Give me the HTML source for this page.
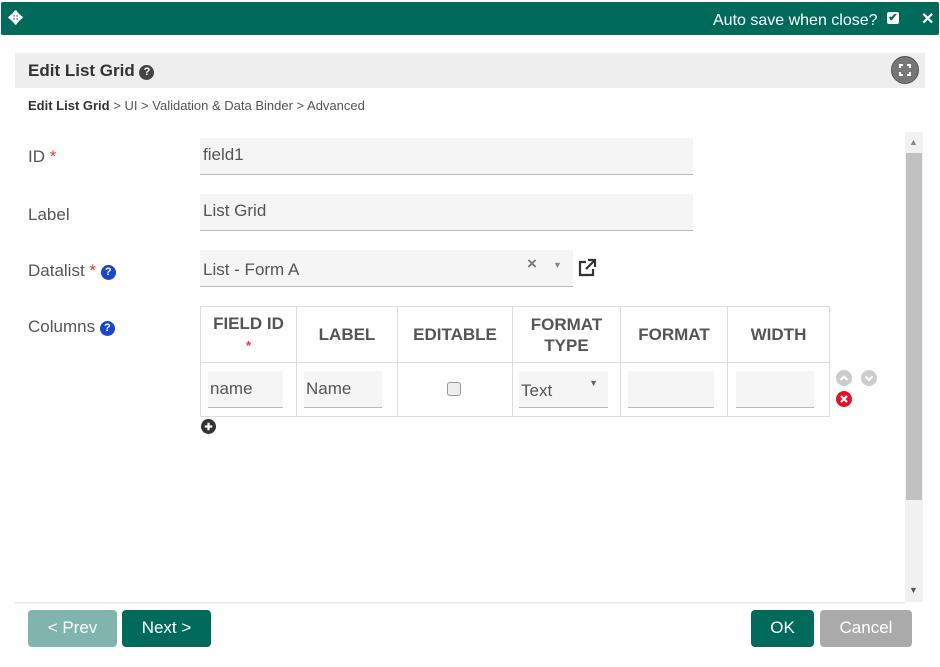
<!DOCTYPE html>
<html><head><style>
*{box-sizing:border-box;margin:0;padding:0}
body{width:940px;height:667px;background:#fff;font-family:"Liberation Sans",sans-serif;position:relative;overflow:hidden;color:#333}
.a{position:absolute}
.top{left:1px;top:2px;width:938px;height:33px;background:#006b5b;border-radius:2px}
.inp{position:absolute;background:#f5f5f5;border-bottom:1px solid #bbb;font-size:17px;color:#555;padding-left:3px}
.lbl{position:absolute;left:28px;font-size:17px;color:#555}
.req{color:#e33}
.q{display:inline-block;width:15px;height:15px;border-radius:50%;background:#1a47c8;color:#fff;font-size:11px;font-weight:bold;text-align:center;line-height:15px;vertical-align:1px}
table{border-collapse:collapse;position:absolute;left:200px;top:306px}
td,th{border:1px solid #ddd;font-size:17px}
th{height:56px;color:#555;font-weight:bold;text-align:center;line-height:21px}
td{height:54px;position:relative}
.ci{position:absolute;top:8px;height:37px;background:#f5f5f5;border-bottom:1px solid #bbb;font-size:17px;color:#555;padding:8px 0 0 2px}
.btn{position:absolute;top:610px;height:37px;border-radius:4px;color:#fff;font-size:17px;text-align:center;line-height:36px}
.circ{position:absolute;border-radius:50%;color:#fff;text-align:center;font-weight:bold}
</style></head><body>
<div class="a top"></div>
<div class="a" style="left:8px;top:9px;color:#fff;font-size:18px;font-weight:bold;line-height:18px">✥</div>
<div class="a" style="left:713px;top:12px;color:#fff;font-size:16px">Auto save when close?</div>
<div class="a" style="left:887px;top:12px;width:12px;height:12px;background:#fff;border-radius:2px;color:#006b5b;font-size:11px;line-height:12px;text-align:center;font-weight:bold">✔</div>
<div class="a" style="left:921px;top:9px;color:#fff;font-size:16px;font-weight:bold">✕</div>

<div class="a" style="left:15px;top:53px;width:910px;height:35px;background:#eee"></div>
<div class="a" style="left:28px;top:61px;font-size:17px;font-weight:bold;color:#333">Edit List Grid <span class="q" style="background:#444">?</span></div>
<div class="circ" style="left:891px;top:56px;width:28px;height:28px;background:#777;border:1px solid #555"><svg width="26" height="26" viewBox="0 0 26 26" fill="none" stroke="#fff" stroke-width="2"><path d="M8 11V8h3M15 8h3v3M18 15v3h-3M11 18H8v-3"/></svg></div>
<div class="a" style="left:28px;top:98px;font-size:13px;color:#555"><b style="color:#333">Edit List Grid</b> &gt; UI &gt; Validation &amp; Data Binder &gt; Advanced</div>

<div class="a" style="left:905px;top:132px;width:18px;height:470px;background:#f1f1f1"></div>
<div class="a" style="left:906px;top:153px;width:16px;height:347px;background:#c1c1c1"></div>
<div class="a" style="left:909px;top:137px;font-size:9px;color:#888">▲</div>
<div class="a" style="left:909px;top:585px;font-size:9px;color:#555">▼</div>
<div class="a" style="left:15px;top:602px;width:890px;height:2px;background:#eee"></div>

<div class="lbl" style="top:147px">ID <span class="req">*</span></div>
<div class="inp" style="left:200px;top:138px;width:493px;height:37px;line-height:34px">field1</div>
<div class="lbl" style="top:205px">Label</div>
<div class="inp" style="left:200px;top:194px;width:493px;height:37px;line-height:34px">List Grid</div>
<div class="lbl" style="top:261px">Datalist <span class="req">*</span> <span class="q">?</span></div>
<div class="inp" style="left:200px;top:250px;width:373px;height:37px;line-height:40px">List - Form A</div>
<div class="a" style="left:527px;top:254px;font-size:17px;color:#777;font-weight:bold">×</div>
<div class="a" style="left:553px;top:260px;font-size:9px;color:#888">▼</div>
<svg class="a" style="left:578px;top:258px" width="19" height="19" viewBox="0 0 19 19" fill="none" stroke="#333" stroke-width="2.2"><path d="M8 4H2v13h13v-6"/><path d="M10 2h7v7M17 2L8 11"/></svg>
<div class="lbl" style="top:317px">Columns <span class="q">?</span></div>

<table>
<tr><th style="width:96px">FIELD ID<br><span class="req" style="font-size:13px">*</span></th><th style="width:101px">LABEL</th><th style="width:115px">EDITABLE</th><th style="width:108px">FORMAT<br>TYPE</th><th style="width:107px">FORMAT</th><th style="width:102px">WIDTH</th></tr>
<tr><td><div class="ci" style="left:7px;width:75px">name</div></td>
<td><div class="ci" style="left:7px;width:78px">Name</div></td>
<td><div class="a" style="left:49px;top:19px;width:14px;height:14px;border:1px solid #999;border-radius:3px;background:#eee"></div></td>
<td><div class="ci" style="left:6px;width:89px;padding-top:10px">Text<span style="position:absolute;right:10px;top:7px;font-size:9px;color:#666">▼</span></div></td>
<td><div class="ci" style="left:7px;width:86px"></div></td>
<td><div class="ci" style="left:8px;width:78px"></div></td></tr>
</table>
<svg class="a" style="left:836px;top:370px" width="16" height="16" viewBox="0 0 16 16"><circle cx="8" cy="8" r="8" fill="#ccc"/><path d="M4.5 10L8 6.5l3.5 3.5" stroke="#fff" stroke-width="2" fill="none"/></svg>
<svg class="a" style="left:861px;top:370px" width="16" height="16" viewBox="0 0 16 16"><circle cx="8" cy="8" r="8" fill="#ccc"/><path d="M4.5 6.5L8 10l3.5-3.5" stroke="#fff" stroke-width="2" fill="none"/></svg>
<svg class="a" style="left:836px;top:391px" width="16" height="16" viewBox="0 0 16 16"><circle cx="8" cy="8" r="8" fill="#e3122a"/><path d="M5 5l6 6M11 5l-6 6" stroke="#fff" stroke-width="2.2"/></svg>
<svg class="a" style="left:201px;top:419px" width="15" height="15" viewBox="0 0 16 16"><circle cx="8" cy="8" r="8" fill="#333"/><path d="M8 4v8M4 8h8" stroke="#fff" stroke-width="2.4"/></svg>

<div class="btn" style="left:28px;width:89px;background:#80b5ad">&lt; Prev</div>
<div class="btn" style="left:122px;width:89px;background:#006b5b">Next &gt;</div>
<div class="btn" style="left:751px;width:63px;background:#006b5b">OK</div>
<div class="btn" style="left:820px;width:92px;background:#aaa">Cancel</div>
</body></html>
